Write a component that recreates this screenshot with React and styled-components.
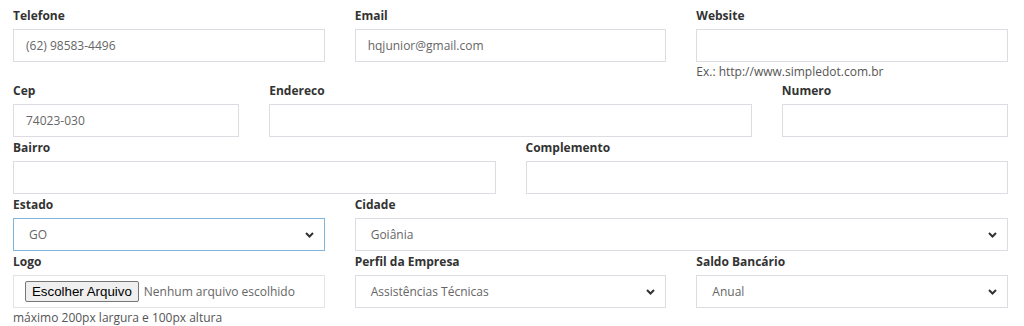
import React from 'react'
import styled, { createGlobalStyle } from 'styled-components'

const Global = createGlobalStyle`
  body {
    margin: 0;
    background: #fff;
    font-family: "Open Sans", "Noto Sans", sans-serif;
  }
`

const Form = styled.div`
  display: grid;
  grid-template-columns: repeat(12, 1fr);
  column-gap: 30px;
  row-gap: 2px;
  align-items: start;
  padding: 7px 16px 0 13px;
`

const Group = styled.div`
  grid-column: span ${p => p.span};
  display: flex;
  flex-direction: column;
  min-width: 0;
`

const Label = styled.label`
  display: block;
  font-size: 12px;
  font-weight: 700;
  line-height: 18px;
  color: #333;
  margin-bottom: 4px;
`

const Input = styled.input`
  box-sizing: border-box;
  width: 100%;
  height: 33px;
  border: 1px solid #dcdce2;
  border-radius: 0;
  padding: 0 12px;
  font-family: inherit;
  font-size: 12px;
  color: #666;
  background: #fff;
  outline: none;
`

const SelectBox = styled.div`
  position: relative;
  box-sizing: border-box;
  height: 33px;
  border: 1px solid ${p => (p.focus ? '#7fb4dc' : '#dcdce2')};
  display: flex;
  align-items: center;
  padding: 0 15px;
  font-size: 12px;
  color: #666;
  background: #fff;
`

const Chevron = styled.svg`
  position: absolute;
  right: 10px;
  top: 50%;
  margin-top: -3px;
`

const Help = styled.div`
  margin-top: 2px;
  font-size: 12px;
  line-height: 16px;
  color: #555;
`

const FileBox = styled.div`
  box-sizing: border-box;
  height: 33px;
  border: 1px solid #e3e3e8;
  display: flex;
  align-items: center;
  padding: 0 11px;
  gap: 5px;
`

const FileButton = styled.button`
  height: 21px;
  padding: 0 6px;
  font-family: "Liberation Sans", Arial, sans-serif;
  font-size: 13.3px;
  color: #000;
  background: #efefef;
  border: 1px solid #767676;
  border-radius: 2px;
`

const FileName = styled.span`
  font-size: 12px;
  color: #666;
`

function Select({ value, focus }) {
  return (
    <SelectBox focus={focus}>
      {value}
      <Chevron width="9" height="6" viewBox="0 0 9 6">
        <path d="M1 1l3.5 3.5L8 1" fill="none" stroke="#333" strokeWidth="2" />
      </Chevron>
    </SelectBox>
  )
}

function App() {
  return (
    <>
      <Global />
      <Form>
        <Group span={4}>
          <Label>Telefone</Label>
          <Input defaultValue="(62) 98583-4496" />
        </Group>
        <Group span={4}>
          <Label>Email</Label>
          <Input defaultValue="hqjunior@gmail.com" />
        </Group>
        <Group span={4}>
          <Label>Website</Label>
          <Input />
          <Help>Ex.: http://www.simpledot.com.br</Help>
        </Group>

        <Group span={3}>
          <Label>Cep</Label>
          <Input defaultValue="74023-030" />
        </Group>
        <Group span={6}>
          <Label>Endereco</Label>
          <Input />
        </Group>
        <Group span={3}>
          <Label>Numero</Label>
          <Input />
        </Group>

        <Group span={6}>
          <Label>Bairro</Label>
          <Input />
        </Group>
        <Group span={6}>
          <Label>Complemento</Label>
          <Input />
        </Group>

        <Group span={4}>
          <Label>Estado</Label>
          <Select value="GO" focus />
        </Group>
        <Group span={8}>
          <Label>Cidade</Label>
          <Select value="Goiânia" />
        </Group>

        <Group span={4}>
          <Label>Logo</Label>
          <FileBox>
            <FileButton>Escolher Arquivo</FileButton>
            <FileName>Nenhum arquivo escolhido</FileName>
          </FileBox>
          <Help>máximo 200px largura e 100px altura</Help>
        </Group>
        <Group span={4}>
          <Label>Perfil da Empresa</Label>
          <Select value="Assistências Técnicas" />
        </Group>
        <Group span={4}>
          <Label>Saldo Bancário</Label>
          <Select value="Anual" />
        </Group>
      </Form>
    </>
  )
}

export default App
